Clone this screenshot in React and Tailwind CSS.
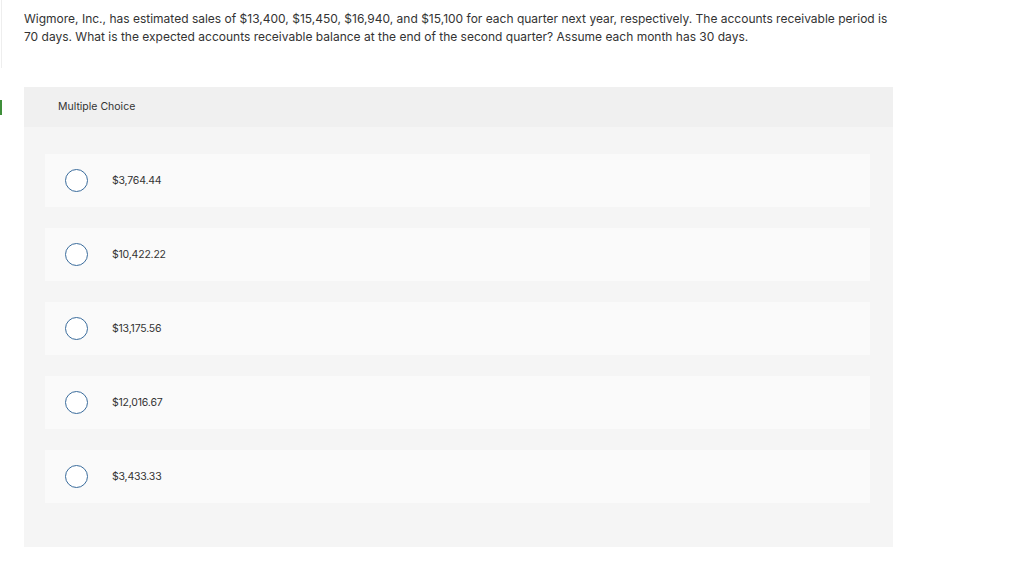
import React from 'react';

const options = ['$3,764.44', '$10,422.22', '$13,175.56', '$12,016.67', '$3,433.33'];

function Option({ label }) {
  return (
    <label className="flex h-[53px] items-center bg-[#fafafa] pl-[20px] cursor-pointer">
      <span className="h-[23px] w-[23px] shrink-0 rounded-full border border-[#3a6c9c] bg-white" />
      <span className="ml-[24px] text-[10.5px] tracking-[-0.2px] text-[#333]">{label}</span>
    </label>
  );
}

export default function App() {
  return (
    <div className="relative min-h-[565px] bg-white font-['Inter',sans-serif] text-[#333]">
      <div className="absolute left-0 top-0 h-[68px] w-[2px] border-r border-[#eeeeee]" />
      <div className="absolute left-0 top-[100px] h-[15px] w-[2px] bg-[#3f8f3a]" />

      <div className="px-[24px] pt-[10px]">
        <p className="w-[866px] text-[12px] leading-[18px] text-[#333]">
          Wigmore, Inc., has estimated sales of $13,400, $15,450, $16,940, and $15,100 for each quarter next year, respectively. The accounts receivable period is 70 days. What is the expected accounts receivable balance at the end of the second quarter? Assume each month has 30 days.
        </p>

        <div className="mt-[41px] w-[869px] bg-[#f5f5f5] pb-[44px]">
          <div className="flex h-[40px] items-center bg-[#f0f0f0] pl-[34px] text-[10.5px] text-[#333]">
            Multiple Choice
          </div>
          <div className="flex flex-col gap-[21px] pl-[21px] pr-[23px] pt-[27px]">
            {options.map((o) => (
              <Option key={o} label={o} />
            ))}
          </div>
        </div>
      </div>
    </div>
  );
}
